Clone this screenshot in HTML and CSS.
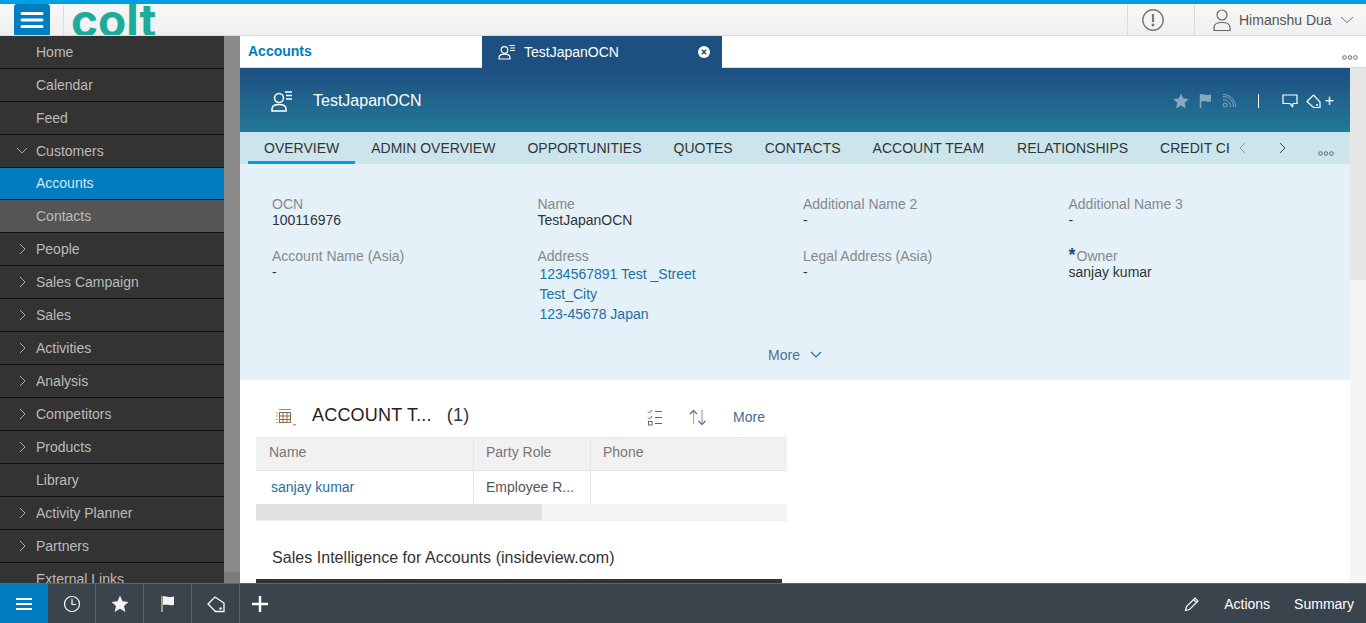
FILE: index.html
```html
<!DOCTYPE html>
<html lang="en">

<head>
    <meta charset="UTF-8">
    <meta name="viewport" content="width=device-width, initial-scale=1.0">
    <title>Accounts</title>
    <link rel="stylesheet" href="styles.css">
</head>

<body>

    <header class="topbar">
        <div class="menu-btn">
            <svg width="24" height="18" viewBox="0 0 24 18"><path d="M2 2.500h20M2 9h20M2 15.500h20" stroke="#fff" stroke-width="3" stroke-linecap="round"/></svg>
        </div>
        <div class="logo">colt</div>
        <div class="topbar-right">
            <div class="alert-box">
                <svg width="24" height="24" viewBox="0 0 24 24"><circle cx="12" cy="12" r="10.200" fill="none" stroke="#777" stroke-width="1.400"/><path d="M12 6v8" stroke="#777" stroke-width="2.200"/><circle cx="12" cy="17" r="1.400" fill="#777"/></svg>
            </div>
            <div class="user-box">
                <svg width="20" height="24" viewBox="0 0 20 24"><circle cx="10" cy="7" r="5" fill="none" stroke="#666" stroke-width="1.200"/><path d="M2 22.500v-3c0-3 3-5 8-5s8 2 8 5v3z" fill="none" stroke="#666" stroke-width="1.200"/></svg>
                <span>Himanshu Dua</span>
                <svg width="14" height="8" viewBox="0 0 14 8"><path d="M1 1l6 5.500L13 1" fill="none" stroke="#777" stroke-width="1"/></svg>
            </div>
        </div>
    </header>

    <div class="layout">
        <nav class="sidebar">
            <div class="nav-list">
                <div class="nav-item">Home</div>
                <div class="nav-item">Calendar</div>
                <div class="nav-item">Feed</div>
                <div class="nav-item"><svg class="arrow open" width="12" height="8" viewBox="0 0 12 8"><path d="M1 1l5 5 5-5" fill="none" stroke="#aaa"/></svg>Customers</div>
                <div class="nav-item active">Accounts</div>
                <div class="nav-item sub">Contacts</div>
                <div class="nav-item"><svg class="arrow" width="12" height="12" viewBox="0 0 12 12"><path d="M4 1l5 5-5 5" fill="none" stroke="#aaa"/></svg>People</div>
                <div class="nav-item"><svg class="arrow" width="12" height="12" viewBox="0 0 12 12"><path d="M4 1l5 5-5 5" fill="none" stroke="#aaa"/></svg>Sales Campaign</div>
                <div class="nav-item"><svg class="arrow" width="12" height="12" viewBox="0 0 12 12"><path d="M4 1l5 5-5 5" fill="none" stroke="#aaa"/></svg>Sales</div>
                <div class="nav-item"><svg class="arrow" width="12" height="12" viewBox="0 0 12 12"><path d="M4 1l5 5-5 5" fill="none" stroke="#aaa"/></svg>Activities</div>
                <div class="nav-item"><svg class="arrow" width="12" height="12" viewBox="0 0 12 12"><path d="M4 1l5 5-5 5" fill="none" stroke="#aaa"/></svg>Analysis</div>
                <div class="nav-item"><svg class="arrow" width="12" height="12" viewBox="0 0 12 12"><path d="M4 1l5 5-5 5" fill="none" stroke="#aaa"/></svg>Competitors</div>
                <div class="nav-item"><svg class="arrow" width="12" height="12" viewBox="0 0 12 12"><path d="M4 1l5 5-5 5" fill="none" stroke="#aaa"/></svg>Products</div>
                <div class="nav-item">Library</div>
                <div class="nav-item"><svg class="arrow" width="12" height="12" viewBox="0 0 12 12"><path d="M4 1l5 5-5 5" fill="none" stroke="#aaa"/></svg>Activity Planner</div>
                <div class="nav-item"><svg class="arrow" width="12" height="12" viewBox="0 0 12 12"><path d="M4 1l5 5-5 5" fill="none" stroke="#aaa"/></svg>Partners</div>
                <div class="nav-item">External Links</div>
            </div>
            <div class="side-scroll"><div class="side-thumb"></div></div>
        </nav>

        <div class="workspace">
            <div class="tabs">
                <div class="tab-home">Accounts</div>
                <div class="tab-open">
                    <svg width="18" height="16" viewBox="0 0 18 16"><circle cx="6.500" cy="6" r="3.300" fill="none" stroke="#fff" stroke-width="1.200"/><path d="M1 15v-1.500c0-2 2-3.300 5.500-3.300s5.500 1.300 5.500 3.300V15z" fill="none" stroke="#fff" stroke-width="1.200"/><path d="M11 1.500h6M12 4h5M12 6.500h5" stroke="#fff" stroke-width="1.200"/></svg>
                    <span>TestJapanOCN</span>
                    <span class="tab-close"><svg width="12" height="12" viewBox="0 0 12 12"><circle cx="6" cy="6" r="6" fill="#fff"/><path d="M3.800 3.800l4.400 4.400M8.200 3.800l-4.400 4.400" stroke="#1d4f80" stroke-width="1.500"/></svg></span>
                </div>
                <svg class="dots tabs-dots" width="16" height="5" viewBox="0 0 16 5"><circle cx="2.500" cy="2.500" r="1.800" fill="none" stroke="#666"/><circle cx="8" cy="2.500" r="1.800" fill="none" stroke="#666"/><circle cx="13.500" cy="2.500" r="1.800" fill="none" stroke="#666"/></svg>
            </div>

            <div class="page-row">
                <main class="main">
                    <div class="obj-header">
                        <svg width="24" height="22" viewBox="0 0 24 22"><circle cx="9" cy="8" r="4.500" fill="none" stroke="#fff" stroke-width="1.500"/><path d="M2 21v-2c0-3 3-4.500 7-4.500s7 1.500 7 4.500v2z" fill="none" stroke="#fff" stroke-width="1.500"/><path d="M15 2h7M16 5.500h6M16 9h6" stroke="#fff" stroke-width="1.500"/></svg>
                        <span class="obj-title">TestJapanOCN</span>
                        <div class="obj-actions">
                            <svg class="dim star-ico" width="16" height="16" viewBox="0 0 16 16"><path d="M8 .5l2.300 5 5.400.6-4 3.700 1.100 5.400L8 12.500l-4.800 2.700 1.100-5.400-4-3.700 5.400-.6z" fill="#fff"/></svg>
                            <svg class="dim" width="14" height="16" viewBox="0 0 14 16"><path d="M1.500 1v14" stroke="#fff" stroke-width="1.500"/><path d="M2 1.500c3-1 4 1 7 .5 1 0 2-.5 3-.5v7c-3 1-5-1-10 0z" fill="#fff"/></svg>
                            <svg class="dim" width="14" height="14" viewBox="0 0 14 14"><circle cx="3" cy="11" r="2" fill="none" stroke="#fff"/><path d="M1 5.500c4 0 7.500 3.500 7.500 7.500M1 2.500c6 0 10.500 4.500 10.500 10.500M1 .5c7 0 12.500 5.500 12.500 12.500" fill="none" stroke="#fff"/></svg>
                            <span class="obj-sep"></span>
                            <svg class="chat-ico" width="16" height="14" viewBox="0 0 16 14"><path d="M1 1h14v8.500H11l-.5 3-2.500-3H1z" fill="none" stroke="#fff" stroke-width="1.200"/></svg>
                            <svg width="15" height="15" viewBox="0 0 15 15"><path d="M1 7.500L7.500 1 14 8v5.500H7.500z" fill="none" stroke="#fff" stroke-width="1.200"/><circle cx="11" cy="11" r="1" fill="#fff"/></svg>
                            <span class="plus">+</span>
                        </div>
                    </div>

                    <div class="subtabs">
                        <div class="subtab current">OVERVIEW</div>
                        <div class="subtab">ADMIN OVERVIEW</div>
                        <div class="subtab">OPPORTUNITIES</div>
                        <div class="subtab">QUOTES</div>
                        <div class="subtab">CONTACTS</div>
                        <div class="subtab">ACCOUNT TEAM</div>
                        <div class="subtab shifted">RELATIONSHIPS</div>
                        <div class="subtab clipped">CREDIT CHECK</div>
                        <div class="subtab-nav">
                            <svg width="8" height="12" viewBox="0 0 8 12"><path d="M7 1L2 6l5 5" fill="none" stroke="#8a9aa5"/></svg>
                            <svg width="8" height="12" viewBox="0 0 8 12"><path d="M1 1l5 5-5 5" fill="none" stroke="#445"/></svg>
                        </div>
                        <svg class="dots subtabs-dots" width="16" height="5" viewBox="0 0 16 5"><circle cx="2.500" cy="2.500" r="1.800" fill="none" stroke="#666"/><circle cx="8" cy="2.500" r="1.800" fill="none" stroke="#666"/><circle cx="13.500" cy="2.500" r="1.800" fill="none" stroke="#666"/></svg>
                    </div>

                    <section class="details">
                        <div class="field-grid">
                            <div class="field"><label>OCN</label><div>100116976</div></div>
                            <div class="field"><label>Name</label><div>TestJapanOCN</div></div>
                            <div class="field"><label>Additional Name 2</label><div>-</div></div>
                            <div class="field"><label>Additional Name 3</label><div>-</div></div>
                            <div class="field"><label>Account Name (Asia)</label><div>-</div></div>
                            <div class="field"><label>Address</label><div class="address">1234567891 Test _Street<br>Test_City<br>123-45678 Japan</div></div>
                            <div class="field"><label>Legal Address (Asia)</label><div>-</div></div>
                            <div class="field"><label><b class="req">*</b>Owner</label><div>sanjay kumar</div></div>
                        </div>
                        <div class="more-row">More <svg width="12" height="8" viewBox="0 0 12 8"><path d="M1 1l5 5 5-5" fill="none" stroke="#1f6f9f" stroke-width="1.100"/></svg></div>
                    </section>

                    <section class="lower">
                        <div class="team-head">
                            <svg class="grid-ico" width="20" height="18" viewBox="0 0 20 18"><path d="M3 1.500h12" stroke="#888" fill="none"/><path d="M3 4.500h12M3 8h12M3 11.500h12M3 14.500h12M3.500 4v11M7 4v11M11 4v11M14.500 4v11" stroke="#8d6a46" fill="none"/><path d="M0 5h2M0 8h2M0 11.500h2M0 14.500h2" stroke="#e0a24f" fill="none"/><path d="M17 16l1.500 1.500L20 16" stroke="#777" fill="none"/></svg>
                            <span class="team-title">ACCOUNT T...</span>
                            <span class="team-count">(1)</span>
                            <div class="team-tools">
                                <svg width="16" height="17" viewBox="0 0 16 17"><path d="M1 2.500L2.500 4 5 1M1 8.500L2.500 10 5 7M8 2.500h7M8 8.500h7M8 14.500h7" fill="none" stroke="#666"/><rect x="1.500" y="12.500" width="3.500" height="3.500" fill="none" stroke="#666"/></svg>
                                <svg width="18" height="17" viewBox="0 0 18 17"><path d="M4.500 15V1.500" fill="none" stroke="#d9a25f" stroke-width="1.200"/><path d="M1 5l3.500-3.500L8 5" fill="none" stroke="#666" stroke-width="1.200"/><path d="M13 1v14.500" fill="none" stroke="#7fa8cf" stroke-width="1.200"/><path d="M9.500 12l3.500 3.500 3.500-3.500" fill="none" stroke="#666" stroke-width="1.200"/></svg>
                                <span class="team-more">More</span>
                            </div>
                        </div>
                        <div class="table">
                            <div class="row head">
                                <div class="cell c1">Name</div>
                                <div class="cell c2">Party Role</div>
                                <div class="cell c3">Phone</div>
                            </div>
                            <div class="row body">
                                <div class="cell c1 link">sanjay kumar</div>
                                <div class="cell c2">Employee R...</div>
                                <div class="cell c3"></div>
                            </div>
                            <div class="table-scroll"><div class="table-thumb"></div></div>
                        </div>
                        <h3 class="intel-title">Sales Intelligence for Accounts (insideview.com)</h3>
                        <div class="intel-bar"></div>
                    </section>
                </main>

                <div class="page-scroll"><div class="page-thumb"></div></div>
            </div>
        </div>
    </div>

    <footer class="bottombar">
        <div class="bb-btn first"><svg width="18" height="14" viewBox="0 0 18 14"><path d="M1 2h16M1 7h16M1 12h16" stroke="#fff" stroke-width="2"/></svg></div>
        <div class="bb-btn"><svg width="18" height="18" viewBox="0 0 18 18"><circle cx="9" cy="9" r="7.500" fill="none" stroke="#fff" stroke-width="1.200"/><path d="M9 4v5.500h4" fill="none" stroke="#fff" stroke-width="1.200"/></svg></div>
        <div class="bb-btn"><svg width="18" height="18" viewBox="0 0 18 18"><path d="M9 .5l2.500 5.800 6 .6-4.500 4 1.400 6.100L9 13.800 3.600 17 5 10.900l-4.500-4 6-.6z" fill="#f2f2f2"/></svg></div>
        <div class="bb-btn"><svg width="16" height="18" viewBox="0 0 16 18"><path d="M2 1v16" stroke="#c9b98a" stroke-width="1.500"/><path d="M3 1.500c3-1 5 1 8 .5 1 0 2-.3 3-.5v8.500c-3 1-6-1-11 0z" fill="#f2f2f2"/></svg></div>
        <div class="bb-btn"><svg width="18" height="18" viewBox="0 0 18 18"><path d="M1 9l7-7 9 6v8.500H8.500z" fill="none" stroke="#fff" stroke-width="1.300"/><circle cx="13.500" cy="13.500" r="1.200" fill="#fff"/></svg></div>
        <div class="bb-btn last"><svg width="16" height="16" viewBox="0 0 16 16"><path d="M8 0v16M0 8h16" stroke="#fff" stroke-width="2.400"/></svg></div>
        <div class="bb-right">
            <svg width="16" height="16" viewBox="0 0 16 16"><path d="M1.500 14.500l1-4L11 2l3 3-8.500 8.500zM9.500 3.500l3 3" fill="none" stroke="#fff" stroke-width="1.200"/></svg>
            <span class="bb-actions">Actions</span>
            <span class="bb-summary">Summary</span>
        </div>
    </footer>

</body>

</html>
```

FILE: styles.css
```css
/* General Styles */
* {
    margin: 0;
    padding: 0;
    box-sizing: border-box;
    font-family: "Liberation Sans", Arial, sans-serif;
}

html, body {
    height: 100%;
    overflow: hidden;
}

body {
    display: flex;
    flex-direction: column;
    background-color: #fff;
    font-size: 14px;
    color: #333;
}

svg {
    display: block;
    flex-shrink: 0;
}

/* Top Bar */
.topbar {
    height: 36px;
    flex-shrink: 0;
    display: flex;
    align-items: stretch;
    border-top: 4px solid #009fe3;
    border-bottom: 1px solid #dcdcdc;
    background: linear-gradient(#f8f8f8, #efefef);
    overflow: hidden;
}

.menu-btn {
    width: 36px;
    height: 32px;
    margin-left: 14px;
    background-color: #007cc0;
    border-radius: 3px;
    display: flex;
    align-items: center;
    justify-content: center;
}

.logo {
    margin-left: 13px;
    border-left: 1px solid #ddd;
    padding-left: 7px;
    width: 100px;
    color: #1eab9b;
    font-family: Inter, sans-serif;
    font-size: 46px;
    font-weight: 700;
    line-height: 33px;
}

.topbar-right {
    margin-left: auto;
    display: flex;
}

.alert-box {
    width: 68px;
    padding-left: 13px;
    border-left: 1px solid #dcdcdc;
    border-right: 1px solid #dcdcdc;
    display: flex;
    align-items: center;
}

.user-box {
    width: 171px;
    padding-left: 17px;
    display: flex;
    align-items: center;
    gap: 7px;
    color: #555;
    font-size: 14px;
}

.user-box span {
    margin-right: 1px;
}

/* Layout */
.layout {
    flex: 1;
    min-height: 0;
    display: flex;
}

/* Sidebar */
.sidebar {
    width: 240px;
    flex-shrink: 0;
    display: flex;
    overflow: hidden;
}

.nav-list {
    width: 224px;
    background-color: #333;
    overflow: hidden;
}

.nav-item {
    position: relative;
    height: 33px;
    padding-left: 36px;
    border-bottom: 1px solid #111;
    color: #bbb;
    font-size: 14px;
    line-height: 32px;
}

.nav-item .arrow {
    position: absolute;
    left: 16px;
    top: 10px;
}

.nav-item .arrow.open {
    top: 12px;
}

.nav-item.active {
    height: 32px;
    background-color: #007cc0;
    color: #d8e8f2;
    line-height: 31px;
}

.nav-item.sub {
    background-color: #555;
}

.side-scroll {
    width: 16px;
    background-color: #8a8a8a;
    position: relative;
}

.side-thumb {
    position: absolute;
    left: 0;
    right: 0;
    bottom: 0;
    height: 11px;
    background-color: #7b7b7b;
}

/* Workspace */
.workspace {
    flex: 1;
    min-width: 0;
    display: flex;
    flex-direction: column;
}

.tabs {
    height: 32px;
    flex-shrink: 0;
    display: flex;
    border-bottom: 1px solid #ddd;
}

.tab-home {
    width: 242px;
    padding-left: 8px;
    color: #007cc0;
    font-weight: bold;
    font-size: 14px;
    line-height: 30px;
}

.tab-open {
    width: 240px;
    height: 32px;
    background-color: #1d4f80;
    color: #fff;
    display: flex;
    align-items: center;
    padding-left: 16px;
    gap: 8px;
}

.tab-close {
    margin-left: auto;
    margin-right: 12px;
}

.tabs-dots {
    margin: 19px 8px 0 auto;
}

.page-row {
    flex: 1;
    min-height: 0;
    display: flex;
}

.main {
    flex: 1;
    min-width: 0;
    background-color: #fff;
    overflow: hidden;
}

/* Object header */
.obj-header {
    height: 64px;
    display: flex;
    align-items: center;
    padding: 2px 0 0 30px;
    background: linear-gradient(#1d4f80, #24789a);
}

.obj-title {
    margin-left: 19px;
    color: #fff;
    font-size: 16px;
}

.obj-actions {
    margin-left: auto;
    margin-right: 16px;
    display: flex;
    align-items: center;
    gap: 9px;
}

.obj-actions .dim {
    opacity: 0.45;
}

.obj-actions .star-ico {
    margin-right: 1px;
}

.obj-actions .chat-ico {
    margin-right: -1px;
}

.obj-sep {
    width: 1px;
    height: 14px;
    margin: 0 14px 0 13px;
    background-color: #fff;
}

.plus {
    color: #fff;
    font-size: 16px;
    margin-left: -5px;
}

/* Sub tabs */
.subtabs {
    height: 32px;
    display: flex;
    padding-left: 8px;
    background-color: #cce5ed;
    overflow: hidden;
}

.subtab {
    padding: 0 16px;
    color: #333;
    font-size: 14px;
    line-height: 32px;
    white-space: nowrap;
    flex-shrink: 0;
}

.subtab.current {
    border-bottom: 3px solid #009fe3;
    height: 32px;
}

.subtab.shifted {
    margin-left: 1px;
}

.subtab.clipped {
    width: 85px;
    padding-right: 0;
    overflow: hidden;
}

.subtab-nav {
    width: 60px;
    flex-shrink: 0;
    display: flex;
    align-items: center;
    justify-content: space-between;
    padding: 0 2px 0 9px;
}

.subtabs-dots {
    margin: 19px 0 0 29px;
}

/* Details */
.details {
    height: 216px;
    padding: 32px 16px 0 32px;
    background-color: #e4f1f8;
}

.field-grid {
    display: grid;
    grid-template-columns: repeat(4, 265.5px);
    row-gap: 20px;
    font-size: 14px;
    line-height: 16px;
    color: #333;
}

.field label {
    display: block;
    color: #888;
}

.address {
    color: #1f6f9f;
    line-height: 20px;
    padding-left: 2px;
}

.req {
    color: #1d4f80;
    font-size: 18px;
    line-height: 12px;
    margin-right: 1px;
}

.more-row {
    margin-top: 23px;
    display: flex;
    align-items: center;
    justify-content: center;
    gap: 10px;
    padding-right: 16px;
    color: #4a6f8f;
    font-size: 14px;
}

/* Lower section */
.lower {
    width: 547px;
    padding-left: 16px;
}

.team-head {
    height: 57px;
    display: flex;
    align-items: center;
    padding: 13px 0 0 20px;
}

.grid-ico {
    margin-top: 4px;
}

.team-title {
    margin-left: 16px;
    font-size: 18px;
    letter-spacing: 0.2px;
    color: #222;
}

.team-count {
    margin-left: 15px;
    font-size: 18px;
    letter-spacing: 0.2px;
    color: #333;
}

.team-tools {
    margin: 4px 22px 0 auto;
    display: flex;
    align-items: center;
    gap: 26px;
}

.team-more {
    color: #44689a;
}

.row {
    display: flex;
}

.row.head {
    height: 34px;
    background-color: #f1f1f1;
    border-top: 1px solid #e4e4e4;
    border-bottom: 1px solid #e4e4e4;
    color: #777;
    line-height: 29px;
}

.row.body {
    height: 33px;
    line-height: 33px;
    color: #555;
}

.cell {
    padding-left: 12px;
    border-right: 1px solid #e6e6e6;
}

.c1 {
    width: 218px;
    padding-left: 13px;
}

.c2 {
    width: 117px;
}

.c3 {
    flex: 1;
    border-right: none;
}

.link {
    color: #1f6f9f;
    padding-left: 15px;
}

.table-scroll {
    height: 17px;
    background-color: #f5f5f5;
    border-bottom: 1px solid #eee;
}

.table-thumb {
    width: 286px;
    height: 16px;
    background-color: #e2e2e2;
}

.intel-title {
    margin: 27px 0 0 16px;
    font-size: 16px;
    font-weight: normal;
    letter-spacing: 0.04px;
    color: #333;
    line-height: 20px;
}

.intel-bar {
    margin-top: 11px;
    width: 526px;
    height: 10px;
    background-color: #333;
}

/* Page scrollbar */
.page-scroll {
    width: 16px;
    flex-shrink: 0;
    background-color: #f5f5f5;
}

.page-thumb {
    height: 212px;
    background-color: #e6e6e6;
}

/* Bottom bar */
.bottombar {
    height: 40px;
    flex-shrink: 0;
    display: flex;
    align-items: center;
    background-color: #3a444c;
    border-top: 1px solid #5c656c;
}

.bb-btn {
    width: 48px;
    height: 39px;
    display: flex;
    align-items: center;
    justify-content: center;
    border-right: 1px solid #5c656c;
}

.bb-btn.first {
    background-color: #007cc0;
    border-right: none;
}

.bb-btn.last {
    border-right: none;
    margin-left: -4px;
}

.bb-right {
    margin-left: auto;
    margin-right: 12px;
    display: flex;
    align-items: center;
    color: #fff;
    font-size: 14px;
}

.bb-actions {
    margin-left: 24px;
}

.bb-summary {
    margin-left: 24px;
}
```
